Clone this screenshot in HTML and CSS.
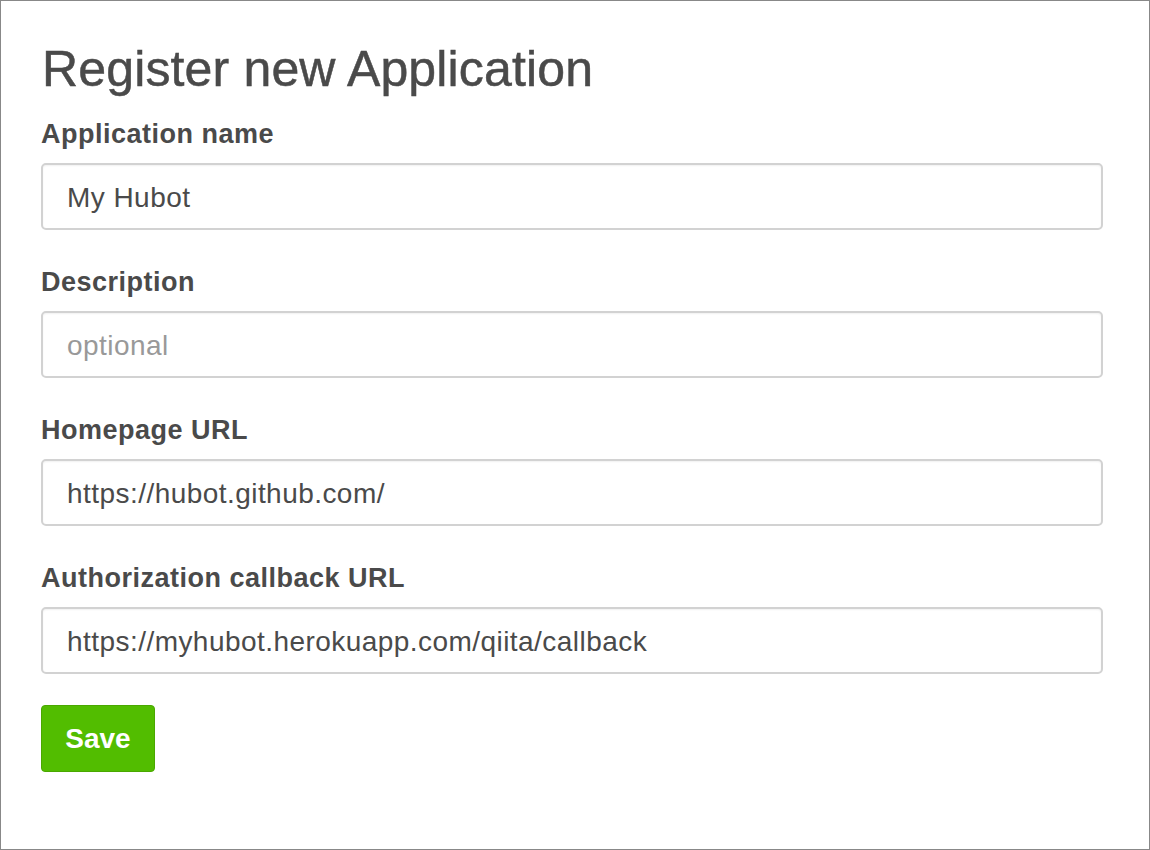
FILE: index.html
```html
<!DOCTYPE html>
<html>
<head>
<meta charset="utf-8">
<link rel="stylesheet" href="styles.css">
</head>
<body>
<div class="frame">
  <h1 class="title">Register new Application</h1>
  <form class="form">
    <div class="field">
      <label class="label">Application name</label>
      <div class="input">My Hubot</div>
    </div>
    <div class="field">
      <label class="label">Description</label>
      <div class="input placeholder">optional</div>
    </div>
    <div class="field">
      <label class="label">Homepage URL</label>
      <div class="input">https://hubot.github.com/</div>
    </div>
    <div class="field field-last">
      <label class="label">Authorization callback URL</label>
      <div class="input">https://myhubot.herokuapp.com/qiita/callback</div>
    </div>
    <div class="actions">
      <button type="button" class="btn">Save</button>
    </div>
  </form>
</div>
</body>
</html>
```

FILE: styles.css
```css
html, body {
  margin: 0;
  padding: 0;
  background: #fff;
}
.frame {
  box-sizing: border-box;
  width: 1150px;
  height: 850px;
  border: 1px solid #888;
  padding: 41px 46px 0 40px;
  font-family: "Liberation Sans", Arial, sans-serif;
  color: #4a4a4a;
}
.title {
  margin: 0 0 19px 1px;
  font-size: 50px;
  line-height: 55px;
  font-weight: normal;
  letter-spacing: 0.15px;
  -webkit-text-stroke: 0.5px #4a4a4a;
}
.form {
  display: flex;
  flex-direction: column;
}
.field {
  display: flex;
  flex-direction: column;
  margin-bottom: 34px;
}
.field-last {
  margin-bottom: 31px;
}
.label {
  font-size: 27px;
  line-height: 36px;
  font-weight: bold;
  letter-spacing: 0.5px;
  margin-bottom: 11px;
}
.input {
  box-sizing: border-box;
  height: 67px;
  border: 2px solid #d2d2d2;
  border-radius: 5px;
  box-shadow: inset 0 1px 2px rgba(0,0,0,0.06);
  padding: 3px 24px 0;
  font-size: 28px;
  line-height: 60px;
  letter-spacing: 0.45px;
  color: #4a4a4a;
}
.input.placeholder {
  color: #999;
}
.actions {
  display: flex;
}
.btn {
  box-sizing: border-box;
  width: 114px;
  height: 67px;
  margin-left: 0;
  background: #52bd00;
  border: 1px solid #4aa800;
  border-radius: 4px;
  color: #fff;
  font-family: "Liberation Sans", Arial, sans-serif;
  font-size: 28px;
  font-weight: bold;
  padding: 0;
}
```
